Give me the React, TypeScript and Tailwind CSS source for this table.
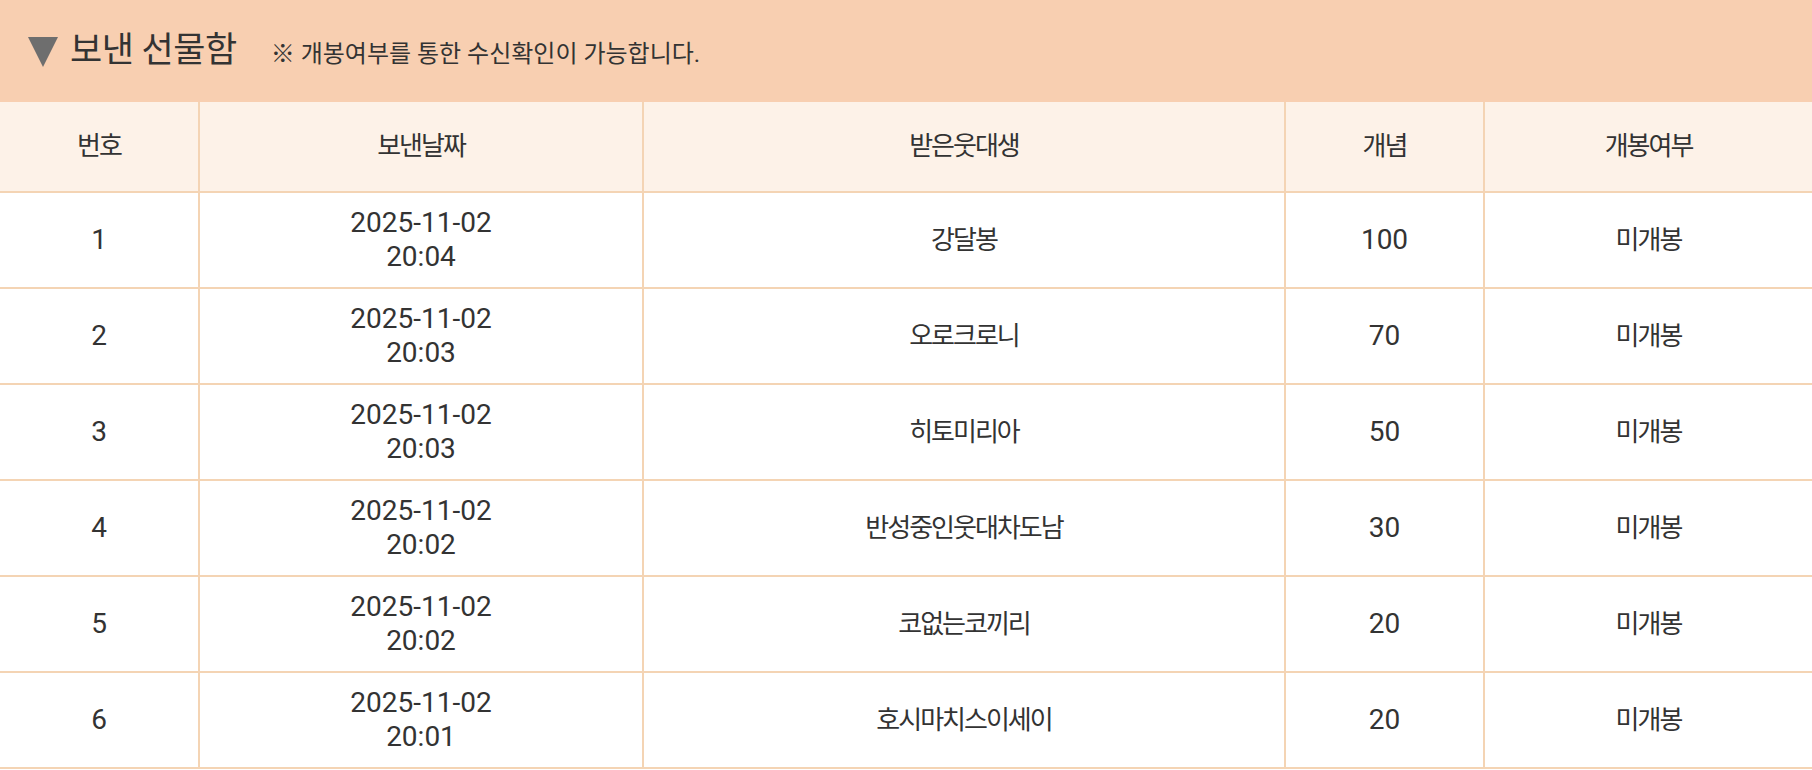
const rows = [
  { no: 1, date: "2025-11-02", time: "20:04", to: "강달봉", count: 100, opened: "미개봉" },
  { no: 2, date: "2025-11-02", time: "20:03", to: "오로크로니", count: 70, opened: "미개봉" },
  { no: 3, date: "2025-11-02", time: "20:03", to: "히토미리아", count: 50, opened: "미개봉" },
  { no: 4, date: "2025-11-02", time: "20:02", to: "반성중인웃대차도남", count: 30, opened: "미개봉" },
  { no: 5, date: "2025-11-02", time: "20:02", to: "코없는코끼리", count: 20, opened: "미개봉" },
  { no: 6, date: "2025-11-02", time: "20:01", to: "호시마치스이세이", count: 20, opened: "미개봉" },
];

const cols = "grid grid-cols-[200px_444px_642px_199px_1fr]";
const cell = "flex items-center justify-center text-center border-r-2 border-b-2 border-[#f4d4b4] last:border-r-0";
const kr = "text-[26px] tracking-[-2px]";
const num = "text-[28px] leading-[34px]";

export default function App() {
  return (
    <div
      className="w-[1812px] h-[770px] overflow-hidden bg-white text-[#333]"
      style={{ fontFamily: "Roboto, 'Noto Sans CJK KR', sans-serif" }}
    >
      {/* title bar */}
      <div className="h-[102px] bg-[#f8cfb1] flex items-center pl-[28px]">
        <svg width="30" height="30" viewBox="0 0 30 30" className="mt-[2px]">
          <polygon points="0,0 30,0 15,30" fill="#6e6e6e" />
        </svg>
        <span className="ml-[12px] text-[35px] tracking-[-0.5px] text-[#333]">보낸 선물함</span>
        <span className="ml-[34px] mt-[6px] text-[24px] text-[#333]">
          ※ 개봉여부를 통한 수신확인이 가능합니다.
        </span>
      </div>

      {/* table header */}
      <div className={`${cols} h-[91px] bg-[#fdf2e8]`}>
        {["번호", "보낸날짜", "받은웃대생", "개념", "개봉여부"].map((h) => (
          <div key={h} className={`${cell} ${kr}`}>
            {h}
          </div>
        ))}
      </div>

      {/* body */}
      {rows.map((r) => (
        <div key={r.no} className={`${cols} h-[96px]`}>
          <div className={`${cell} ${num}`}>{r.no}</div>
          <div className={`${cell} ${num} flex-col`}>
            <span>{r.date}</span>
            <span>{r.time}</span>
          </div>
          <div className={`${cell} ${kr}`}>{r.to}</div>
          <div className={`${cell} ${num}`}>{r.count}</div>
          <div className={`${cell} ${kr}`}>{r.opened}</div>
        </div>
      ))}
    </div>
  );
}
